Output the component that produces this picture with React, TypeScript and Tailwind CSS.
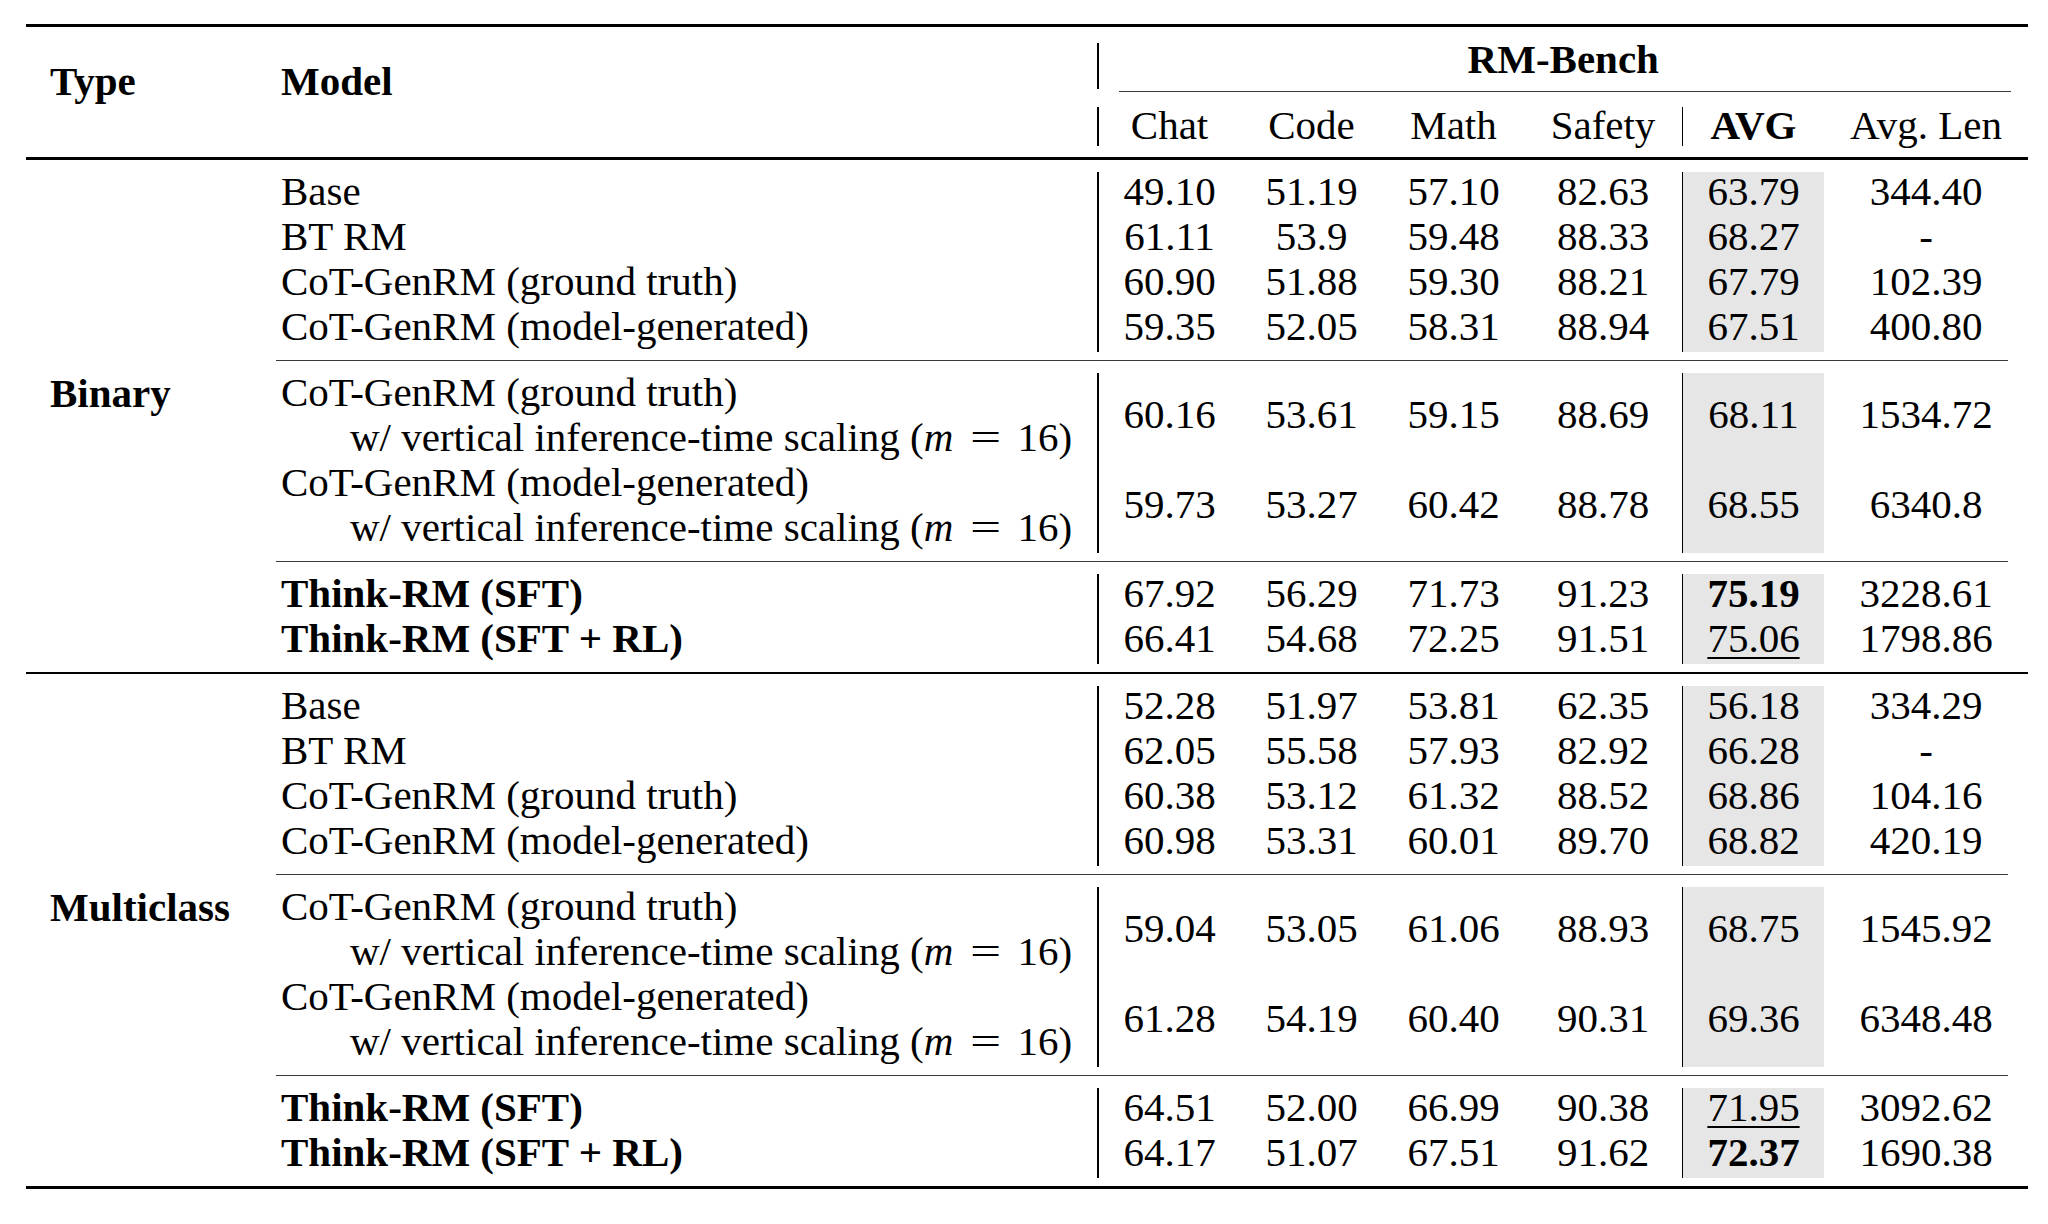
import React from "react";

type Row = {
  model: string;
  sub?: boolean;
  v: string[];
  avg: string;
  avgStyle?: "bold" | "under";
  len: string;
  bold?: boolean;
};

type Section = {
  type: string;
  b1: Row[];
  b2: Row[];
  b3: Row[];
};

const sections: Section[] = [
  {
    type: "Binary",
    b1: [
      { model: "Base", v: ["49.10", "51.19", "57.10", "82.63"], avg: "63.79", len: "344.40" },
      { model: "BT RM", v: ["61.11", "53.9", "59.48", "88.33"], avg: "68.27", len: "-" },
      { model: "CoT-GenRM (ground truth)", v: ["60.90", "51.88", "59.30", "88.21"], avg: "67.79", len: "102.39" },
      { model: "CoT-GenRM (model-generated)", v: ["59.35", "52.05", "58.31", "88.94"], avg: "67.51", len: "400.80" },
    ],
    b2: [
      { model: "CoT-GenRM (ground truth)", sub: true, v: ["60.16", "53.61", "59.15", "88.69"], avg: "68.11", len: "1534.72" },
      { model: "CoT-GenRM (model-generated)", sub: true, v: ["59.73", "53.27", "60.42", "88.78"], avg: "68.55", len: "6340.8" },
    ],
    b3: [
      { model: "Think-RM (SFT)", bold: true, v: ["67.92", "56.29", "71.73", "91.23"], avg: "75.19", avgStyle: "bold", len: "3228.61" },
      { model: "Think-RM (SFT + RL)", bold: true, v: ["66.41", "54.68", "72.25", "91.51"], avg: "75.06", avgStyle: "under", len: "1798.86" },
    ],
  },
  {
    type: "Multiclass",
    b1: [
      { model: "Base", v: ["52.28", "51.97", "53.81", "62.35"], avg: "56.18", len: "334.29" },
      { model: "BT RM", v: ["62.05", "55.58", "57.93", "82.92"], avg: "66.28", len: "-" },
      { model: "CoT-GenRM (ground truth)", v: ["60.38", "53.12", "61.32", "88.52"], avg: "68.86", len: "104.16" },
      { model: "CoT-GenRM (model-generated)", v: ["60.98", "53.31", "60.01", "89.70"], avg: "68.82", len: "420.19" },
    ],
    b2: [
      { model: "CoT-GenRM (ground truth)", sub: true, v: ["59.04", "53.05", "61.06", "88.93"], avg: "68.75", len: "1545.92" },
      { model: "CoT-GenRM (model-generated)", sub: true, v: ["61.28", "54.19", "60.40", "90.31"], avg: "69.36", len: "6348.48" },
    ],
    b3: [
      { model: "Think-RM (SFT)", bold: true, v: ["64.51", "52.00", "66.99", "90.38"], avg: "71.95", avgStyle: "under", len: "3092.62" },
      { model: "Think-RM (SFT + RL)", bold: true, v: ["64.17", "51.07", "67.51", "91.62"], avg: "72.37", avgStyle: "bold", len: "1690.38" },
    ],
  },
];

const colW = ["w-[142px]", "w-[142px]", "w-[142px]", "w-[157px]"];

function Bar() {
  return <div className="w-[1.5px] self-stretch bg-black shrink-0" />;
}

function Math16() {
  return (
    <span>
      (<span className="italic">m</span>
      <span className="inline-block mx-[0.5em] scale-x-[1.35]">=</span>16)
    </span>
  );
}

function DataRow({ r }: { r: Row }) {
  const tall = !!r.sub;
  const cellH = tall ? "h-[90px] pt-[22px]" : "h-[45px]";
  return (
    <div className="flex">
      <div className="w-[821px] pl-[5px] shrink-0">
        <div className={`h-[45px] leading-[38px] whitespace-nowrap ${r.bold ? "font-bold" : ""}`}>{r.model}</div>
        {tall && (
          <div className="h-[45px] leading-[38px] pl-[69px] whitespace-nowrap">
            w/ vertical inference-time scaling <Math16 />
          </div>
        )}
      </div>
      <Bar />
      {r.v.map((x, i) => (
        <div key={i} className={`${colW[i]} ${cellH} leading-[38px] text-center shrink-0`}>
          {x}
        </div>
      ))}
      <Bar />
      <div className={`w-[141px] ${cellH} leading-[38px] text-center bg-[#e6e6e6] shrink-0`}>
        <span
          className={
            r.avgStyle === "bold"
              ? "font-bold"
              : r.avgStyle === "under"
              ? "underline decoration-[1.5px] underline-offset-[5px]"
              : ""
          }
        >
          {r.avg}
        </span>
      </div>
      <div className={`w-[204px] ${cellH} leading-[38px] text-center shrink-0`}>{r.len}</div>
    </div>
  );
}

function SectionView({ s }: { s: Section }) {
  return (
    <div className="flex pt-[12px]">
      <div className="w-[250px] pl-[24px] pt-[202px] font-bold leading-[38px] shrink-0">{s.type}</div>
      <div className="flex flex-col">
        {s.b1.map((r, i) => (
          <DataRow key={i} r={r} />
        ))}
        <div className="mt-[8px] mb-[12px] h-px mr-[20px] bg-[#3a3a3a]" />
        {s.b2.map((r, i) => (
          <DataRow key={i} r={r} />
        ))}
        <div className="mt-[8px] mb-[12px] h-px mr-[20px] bg-[#3a3a3a]" />
        {s.b3.map((r, i) => (
          <DataRow key={i} r={r} />
        ))}
        <div className="h-[8px]" />
      </div>
    </div>
  );
}

export default function App() {
  return (
    <div className="w-[2048px] h-[1224px] bg-white text-black font-['Liberation_Serif',serif] text-[41px] overflow-hidden">
      <div className="pt-[24px] pl-[26px] w-[2028px]">
        <div className="h-[3px] bg-black" />
        {/* Header */}
        <div className="flex h-[130px]">
          <div className="w-[250px] pl-[24px] pt-[35px] font-bold leading-[38px] shrink-0">Type</div>
          <div className="w-[821px] pl-[5px] pt-[35px] font-bold leading-[38px] shrink-0">Model</div>
          <div className="flex flex-col w-[931px]">
            <div className="flex mt-[16px] h-[46px]">
              <Bar />
              <div className="flex-1 text-center font-bold leading-[33px]">RM-Bench</div>
            </div>
            <div className="mt-[2px] h-px ml-[22px] mr-[17px] bg-[#3a3a3a]" />
            <div className="flex mt-[15px] h-[39px] leading-[37px]">
              <Bar />
              <div className="w-[142px] text-center shrink-0">Chat</div>
              <div className="w-[142px] text-center shrink-0">Code</div>
              <div className="w-[142px] text-center shrink-0">Math</div>
              <div className="w-[157px] text-center shrink-0">Safety</div>
              <Bar />
              <div className="w-[141px] text-center font-bold shrink-0">AVG</div>
              <div className="w-[204px] text-center shrink-0">Avg. Len</div>
            </div>
          </div>
        </div>
        <div className="h-[3px] bg-black" />
        <SectionView s={sections[0]} />
        <div className="h-[2px] bg-black" />
        <SectionView s={sections[1]} />
        <div className="h-[3px] bg-black" />
      </div>
    </div>
  );
}
